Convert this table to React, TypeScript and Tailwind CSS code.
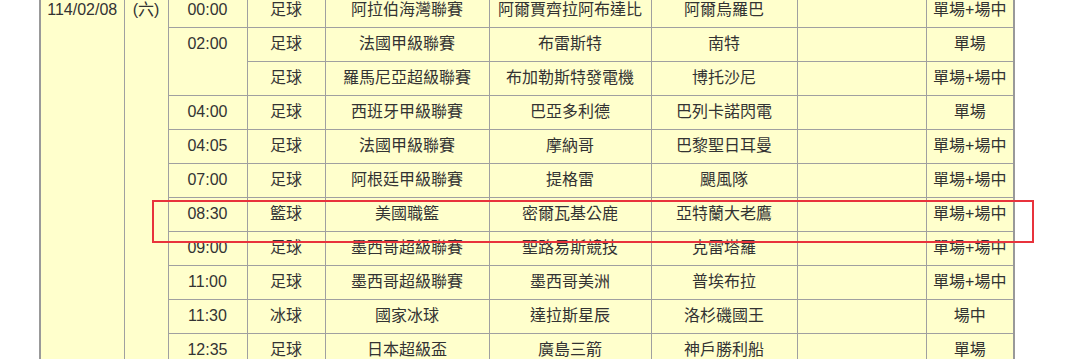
type Match = {
    time?: string;
    span?: number;
    sport: string;
    league: string;
    home: string;
    away: string;
    bet: string;
};

const matches: Match[] = [
    { time: "00:00", sport: "足球", league: "阿拉伯海灣聯賽", home: "阿爾賈齊拉阿布達比", away: "阿爾烏羅巴", bet: "單場+場中" },
    { time: "02:00", span: 2, sport: "足球", league: "法國甲級聯賽", home: "布雷斯特", away: "南特", bet: "單場" },
    { sport: "足球", league: "羅馬尼亞超級聯賽", home: "布加勒斯特發電機", away: "博托沙尼", bet: "單場+場中" },
    { time: "04:00", sport: "足球", league: "西班牙甲級聯賽", home: "巴亞多利德", away: "巴列卡諾閃電", bet: "單場" },
    { time: "04:05", sport: "足球", league: "法國甲級聯賽", home: "摩納哥", away: "巴黎聖日耳曼", bet: "單場+場中" },
    { time: "07:00", sport: "足球", league: "阿根廷甲級聯賽", home: "提格雷", away: "颶風隊", bet: "單場+場中" },
    { time: "08:30", sport: "籃球", league: "美國職籃", home: "密爾瓦基公鹿", away: "亞特蘭大老鷹", bet: "單場+場中" },
    { time: "09:00", sport: "足球", league: "墨西哥超級聯賽", home: "聖路易斯競技", away: "克雷塔羅", bet: "單場+場中" },
    { time: "11:00", sport: "足球", league: "墨西哥超級聯賽", home: "墨西哥美洲", away: "普埃布拉", bet: "單場+場中" },
    { time: "11:30", sport: "冰球", league: "國家冰球", home: "達拉斯星辰", away: "洛杉磯國王", bet: "場中" },
    { time: "12:35", sport: "足球", league: "日本超級盃", home: "廣島三箭", away: "神戶勝利船", bet: "單場" },
];

const cell = "border border-[#a0a0a0] p-0 text-center align-middle whitespace-nowrap";

export default function App() {
    return (
        <div className="w-[1080px] h-[359px] overflow-hidden bg-white">
            <div className="relative -mt-2 pl-[39px]">
                <table
                    className="table-fixed border-collapse border-2 border-[#999] bg-[#ffffcc] text-[16px] leading-[20px] text-[#333]"
                    style={{ fontFamily: '"Liberation Sans", "Noto Sans CJK TC", sans-serif' }}
                >
                    <colgroup>
                        <col className="w-[84px]" />
                        <col className="w-[44px]" />
                        <col className="w-[79px]" />
                        <col className="w-[78px]" />
                        <col className="w-[164px]" />
                        <col className="w-[162px]" />
                        <col className="w-[146px]" />
                        <col className="w-[129px]" />
                        <col className="w-[88px]" />
                    </colgroup>
                    <tbody>
                        {matches.map((m, i) => (
                            <tr key={i} className="h-[34px]">
                                {i === 0 && (
                                    <>
                                        <td rowSpan={matches.length} className={cell + " !align-top pt-[6px]"}>114/02/08</td>
                                        <td rowSpan={matches.length} className={cell + " !align-top pt-[6px]"}>(六)</td>
                                    </>
                                )}
                                {m.time && (
                                    <td rowSpan={m.span ?? 1} className={cell + (m.span ? " !align-top pt-[6px]" : "")}>{m.time}</td>
                                )}
                                <td className={cell}>{m.sport}</td>
                                <td className={cell}>{m.league}</td>
                                <td className={cell}>{m.home}</td>
                                <td className={cell}>{m.away}</td>
                                <td className={cell}></td>
                                <td className={cell}>{m.bet}</td>
                            </tr>
                        ))}
                    </tbody>
                </table>

                {/* highlight box */}
                <div className="absolute left-[152px] top-[208px] w-[882px] h-[43px] border-2 border-[#e8333c] pointer-events-none" />
            </div>
        </div>
    );
}
